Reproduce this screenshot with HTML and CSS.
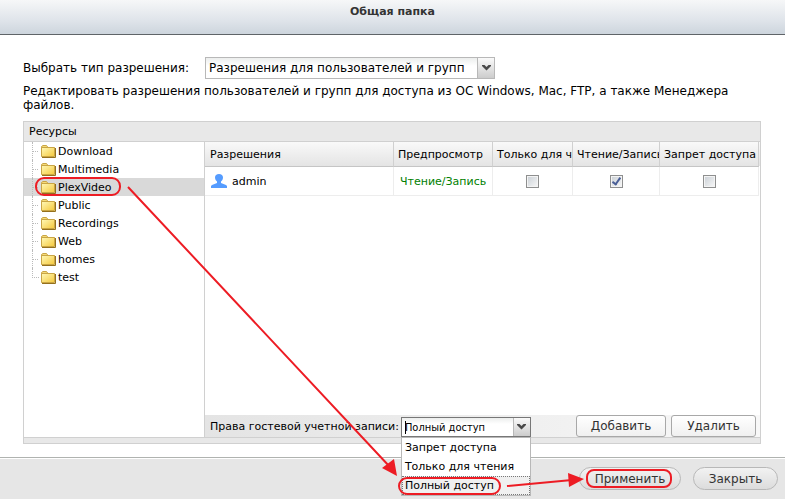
FILE: index.html
```html
<!DOCTYPE html>
<html lang="ru">
<head>
  <meta charset="UTF-8">
  <meta name="viewport" content="width=device-width, initial-scale=1.0">
  <title>Общая папка</title>
  <link rel="stylesheet" href="styles.css">
</head>
<body>
  <!-- Shared icons -->
  <svg class="icon-defs" aria-hidden="true">
    <defs>
      <linearGradient id="folder-fill" x1="0" y1="0" x2="1" y2="1">
        <stop offset="0" stop-color="#fff9b8"/>
        <stop offset="1" stop-color="#f5c83c"/>
      </linearGradient>
      <symbol id="folder" viewBox="0 0 15 14">
        <path d="M.5 12V2.5L2 1.500H5.500L7 3.500H13V12Z" fill="#f6dc78" stroke="#c9a545"/>
        <path d="M.5 3.500H13.500V12.500H.5Z" fill="url(#folder-fill)" stroke="#c9a545"/>
        <path d="M1 13.500H14.500V4" fill="none" stroke="#94701d"/>
      </symbol>
      <symbol id="chevron" viewBox="0 0 9 6">
        <path d="M0 0H2.5L4.5 2L6.5 0H9V1L4.5 5.5L0 1Z" fill="#484848"/>
      </symbol>
    </defs>
  </svg>

  <header class="title-bar">
    <h1>Общая папка</h1>
  </header>

  <main class="content">
    <div class="type-row">
      <label for="permission-type">Выбрать тип разрешения:</label>
      <div class="select-box">
        <select id="permission-type">
          <option>Разрешения для пользователей и групп</option>
          <option>Доступ к хосту NFS</option>
        </select>
        <span class="trigger"><svg width="9" height="6"><use href="#chevron"/></svg></span>
      </div>
    </div>
    <p class="description">Редактировать разрешения пользователей и групп для доступа из ОС Windows, Mac, FTP, а также Менеджера файлов.</p>

    <section class="panel">
      <h2 class="panel-title">Ресурсы</h2>
      <div class="panel-body">
        <ul class="tree">
          <li><svg class="folder"><use href="#folder"/></svg>Download</li>
          <li><svg class="folder"><use href="#folder"/></svg>Multimedia</li>
          <li class="selected"><svg class="folder"><use href="#folder"/></svg>PlexVideo</li>
          <li><svg class="folder"><use href="#folder"/></svg>Public</li>
          <li><svg class="folder"><use href="#folder"/></svg>Recordings</li>
          <li><svg class="folder"><use href="#folder"/></svg>Web</li>
          <li><svg class="folder"><use href="#folder"/></svg>homes</li>
          <li><svg class="folder"><use href="#folder"/></svg>test</li>
        </ul>

        <div class="permissions">
          <table>
            <colgroup>
              <col>
              <col class="col-preview">
              <col class="col-read">
              <col class="col-write">
              <col class="col-deny">
            </colgroup>
            <thead>
              <tr>
                <th>Разрешения</th>
                <th>Предпросмотр</th>
                <th>Только для чтения</th>
                <th>Чтение/Запись</th>
                <th>Запрет доступа</th>
              </tr>
            </thead>
            <tbody>
              <tr>
                <td>
                  <span class="user">
                    <svg width="16" height="14" viewBox="0 0 16 14"><path d="M8 0C10.500 0 12 1.500 12 3.500C12 5.500 11 6.500 10 7.500V9L15 11L16 12V14H0V12L1 11L6 9V7.500C5 6.500 4 5.500 4 3.500C4 1.500 5.500 0 8 0Z" fill="#559cff"/></svg>
                    admin
                  </span>
                </td>
                <td class="granted">Чтение/Запись</td>
                <td class="check"><input type="checkbox" aria-label="Только для чтения"></td>
                <td class="check"><input type="checkbox" aria-label="Чтение/Запись" checked></td>
                <td class="check"><input type="checkbox" aria-label="Запрет доступа"></td>
              </tr>
            </tbody>
          </table>

          <div class="toolbar">
            <label for="guest-rights">Права гостевой учетной записи:</label>
            <div class="combo">
              <input type="text" id="guest-rights" value="Полный доступ">
              <button type="button" class="trigger" aria-label="Открыть список"><svg width="9" height="6"><use href="#chevron"/></svg></button>
              <ul class="menu" role="listbox">
                <li role="option">Запрет доступа</li>
                <li role="option">Только для чтения</li>
                <li role="option" class="active" aria-selected="true">Полный доступ</li>
              </ul>
            </div>
            <div class="toolbar-buttons">
              <button type="button" class="btn btn-add">Добавить</button>
              <button type="button" class="btn">Удалить</button>
            </div>
          </div>
        </div>
      </div>
    </section>
  </main>

  <footer class="actions">
    <button type="button" class="pill pill-apply">Применить</button>
    <button type="button" class="pill">Закрыть</button>
  </footer>

  <!-- Step markers -->
  <svg class="markers" width="785" height="499" viewBox="0 0 785 499" aria-hidden="true">
    <g fill="none" stroke="#ed1c24" stroke-width="2">
      <rect x="36" y="178" width="84" height="17" rx="8"/>
      <rect x="399" y="478" width="101" height="16" rx="8"/>
      <rect x="587" y="470" width="84" height="17" rx="7"/>
      <path d="M128 187L390 467M507 486L572 480"/>
    </g>
    <path d="M397 476L382 468L394 459Z M584 479L569 487L568 473Z" fill="#ed1c24"/>
  </svg>
</body>
</html>
```

FILE: styles.css
```css
* {
  box-sizing: border-box;
}

body {
  margin: 0;
  min-height: 100vh;
  display: flex;
  flex-direction: column;
  position: relative;
  background: #fff;
  color: #000;
  font-family: Verdana, "DejaVu Sans", sans-serif;
  font-size: 11px;
}

button,
input,
select {
  font-family: inherit;
  font-size: inherit;
  color: inherit;
  margin: 0;
}

ul {
  list-style: none;
  margin: 0;
  padding: 0;
}

.icon-defs {
  position: absolute;
  width: 0;
  height: 0;
}

/* Window title */
.title-bar {
  height: 35px;
  padding-top: 5px;
  border-bottom: 1px solid #5f6468;
  background: linear-gradient(#f6f7f8, #dfe4ea 60%, #cdd5dd);
}

.title-bar h1 {
  margin: 0;
  font-size: 11px;
  line-height: 14px;
  text-align: center;
  color: #333;
}

.content {
  flex: 1;
  display: flex;
  flex-direction: column;
  padding: 22px 24px 13px 23px;
}

/* Permission type */
.type-row {
  display: flex;
  align-items: center;
  gap: 16px;
  font-size: 12px;
}

.select-box {
  display: flex;
  width: 290px;
  height: 22px;
  border: 1px solid #b8b8b8;
  background: linear-gradient(#eceeed, #fff 8px);
  position: relative;
}

.select-box select {
  width: 100%;
  padding: 0 18px 0 3px;
  border: 0;
  background: none;
  appearance: none;
}

.trigger {
  display: flex;
  align-items: center;
  justify-content: center;
  flex: none;
  width: 17px;
  padding: 0;
  border: 0;
  border-left: 1px solid #b8b8b8;
  background: linear-gradient(#fafafa, #ccc);
}

.select-box .trigger {
  position: absolute;
  top: 0;
  right: 0;
  bottom: 0;
  pointer-events: none;
}

.description {
  margin: 5px 0 9px;
  font-size: 12px;
  line-height: 14px;
}

/* Resources panel */
.panel {
  flex: 1;
  display: flex;
  flex-direction: column;
  border: 1px solid #d0d0d0;
  padding-bottom: 5px;
  background: #e8e8e8;
}

.panel-title {
  margin: 0;
  padding: 0 5px;
  font-size: 11px;
  font-weight: normal;
  line-height: 19px;
}

.panel-body {
  flex: 1;
  display: flex;
  border-top: 1px solid #d0d0d0;
  border-bottom: 1px solid #d0d0d0;
  background: #fff;
}

.tree {
  flex: none;
  width: 181px;
  border-right: 1px solid #d0d0d0;
}

.tree li {
  display: flex;
  align-items: center;
  gap: 2px;
  height: 18px;
  padding-left: 8px;
}

/* dotted branch lines */
.tree li::before {
  content: "";
  width: 6px;
  height: 18px;
  border-left: 1px dotted #bbb;
  background: repeating-linear-gradient(90deg, #bbb 0 1px, transparent 1px 2px) 0 9px / 100% 1px no-repeat;
}

.tree li:last-child::before {
  height: 9px;
  align-self: flex-start;
  border-bottom: 1px dotted #bbb;
  background: none;
}

.tree li.selected {
  background: #d9d9d9;
}

.folder {
  flex: none;
  width: 15px;
  height: 14px;
}

/* Permissions grid */
.permissions {
  flex: 1;
  min-width: 0;
  display: flex;
  flex-direction: column;
}

table {
  width: 100%;
  table-layout: fixed;
  border-collapse: separate;
  border-spacing: 0;
  padding-right: 1px;
  background: linear-gradient(#f9f9f9, #e4e4e4) 0 0 / 100% 24px no-repeat;
}

.col-preview,
.col-deny {
  width: 99px;
}

.col-read {
  width: 80px;
}

.col-write {
  width: 87px;
}

th,
td {
  overflow: hidden;
  white-space: nowrap;
  text-align: left;
}

th {
  height: 25px;
  padding: 0 0 0 4px;
  border-right: 1px solid #d0d0d0;
  border-bottom: 1px solid #c5c5c5;
  font-weight: normal;
}

td {
  height: 29px;
  padding: 0 6px;
  border-right: 1px solid #ededed;
  border-bottom: 1px solid #ededed;
}

th:first-child {
  padding-left: 5px;
}

.user {
  display: flex;
  align-items: center;
  gap: 5px;
}

.granted {
  color: #008000;
}

.check {
  text-align: center;
}

.check input {
  appearance: none;
  width: 13px;
  height: 13px;
  border: 1px solid #8e8f8f;
  background: linear-gradient(135deg, #c9cfd5, #f8f8f8);
  box-shadow: inset 0 0 0 1px #f4f4f4;
  vertical-align: middle;
}

.check input:checked::before {
  content: "";
  display: block;
  width: 3px;
  height: 7px;
  margin: 0 auto;
  border: solid #4a5f97;
  border-width: 0 2px 2px 0;
  transform: rotate(35deg);
}

/* Guest rights toolbar */
.toolbar {
  display: flex;
  align-items: center;
  gap: 2px;
  height: 22px;
  margin-top: auto;
  padding: 0 4px 0 5px;
  background: linear-gradient(90deg, #e4e4e4, #f8f8f8);
}

.combo {
  display: flex;
  flex: none;
  align-self: flex-end;
  width: 130px;
  height: 20px;
  border: 1px solid #777;
  background: #fff;
  position: relative;
}

.combo input {
  flex: 1;
  min-width: 0;
  padding: 0 3px;
  border: 0;
  outline: 0;
  background: linear-gradient(#eceeed, #fff 6px);
  font-family: Tahoma, "DejaVu Sans Condensed", "Noto Sans", sans-serif;
}

/* text cursor */
.combo::before {
  content: "";
  position: absolute;
  top: 3px;
  left: 3px;
  width: 1px;
  height: 13px;
  background: #000;
}

.menu {
  position: absolute;
  top: 19px;
  left: -1px;
  right: -1px;
  border: 1px solid #b8b8b8;
  background: #fff;
}

.menu li {
  height: 19px;
  padding: 0 2px;
  border: 1px solid transparent;
  line-height: 18px;
}

.menu li.active {
  border: 1px dotted #777;
  background: #f0f0f0;
}

.toolbar-buttons {
  display: flex;
  gap: 5px;
  margin-left: auto;
}

.btn {
  width: 85px;
  height: 22px;
  padding: 0;
  border: 1px solid #a8a8a8;
  border-radius: 3px;
  background: linear-gradient(#fff, #f0f0f0);
  color: #333;
  font-size: 12px;
}

.btn-add {
  width: 90px;
}

/* Bottom actions */
.actions {
  display: flex;
  justify-content: flex-end;
  gap: 12px;
  padding: 9px 7px;
  border-top: 1px solid #b0b3b0;
  background: #e6e6e6;
  box-shadow: inset 0 1px #fff;
}

.pill {
  width: 85px;
  height: 23px;
  padding: 0;
  border: 1px solid #b8b8b8;
  border-radius: 12px;
  background: linear-gradient(#f2f2f2, #dcdcdc);
  color: #333;
  font-size: 12px;
}

.pill-apply {
  width: 102px;
}

.markers {
  position: absolute;
  top: 0;
  left: 0;
  pointer-events: none;
}
```
